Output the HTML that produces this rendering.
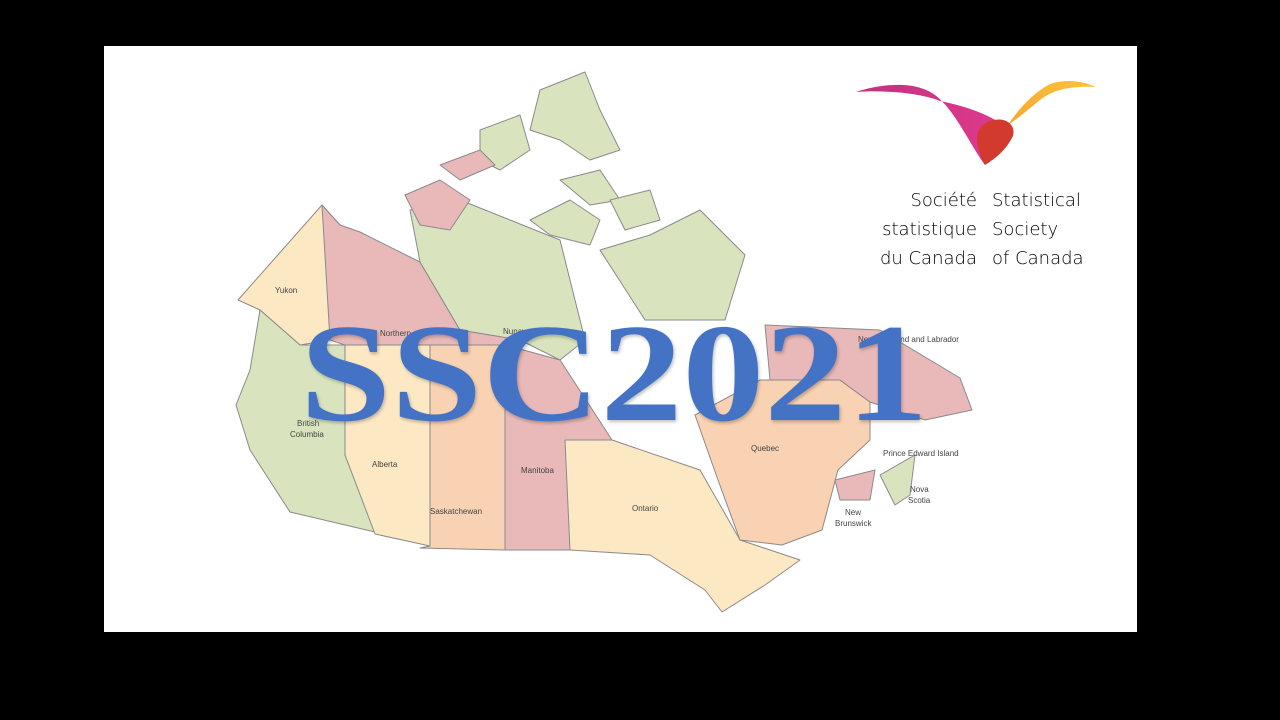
<!DOCTYPE html>
<html><head><meta charset="utf-8"><style>
html,body{margin:0;padding:0;background:#000;width:1280px;height:720px;overflow:hidden}
#w{position:absolute;left:104px;top:46px;width:1033px;height:586px;background:#fff}
svg{position:absolute;left:0;top:0}
#big{position:absolute;left:300px;top:306px;font-family:"Liberation Serif",serif;font-weight:bold;font-size:140px;color:#4472c4;transform-origin:0 0;transform:scaleX(1.17);line-height:136px;text-shadow:1px 2px 3px rgba(0,0,0,.25)}
.lg{position:absolute;font-family:"DejaVu Sans","Liberation Sans",sans-serif;font-size:18px;color:#000;line-height:29px;font-weight:300}
</style></head><body>
<div id="w"></div>
<svg width="1280" height="720" viewBox="0 0 1280 720">
<g stroke="#8a8a8a" stroke-width="1" stroke-linejoin="round">
<polygon fill="#fde8c4" points="238,300 322,205 340,225 330,340 300,345 260,310"/>
<polygon fill="#d9e4bf" points="260,310 300,345 345,345 345,455 375,532 290,512 250,450 236,405 250,370"/>
<polygon fill="#fde8c4" points="345,345 430,345 430,546 375,534 345,455"/>
<polygon fill="#f8d2b3" points="430,345 505,345 505,550 420,548 430,546"/>
<polygon fill="#e8b9b8" points="505,345 560,360 612,440 570,550 505,550"/>
<polygon fill="#fde8c4" points="565,440 612,440 700,470 740,540 800,560 765,585 722,612 705,590 650,555 570,550"/>
<polygon fill="#f8d2b3" points="695,415 760,380 840,380 870,402 870,440 838,470 822,530 782,545 740,540 718,480"/>
<polygon fill="#e8b9b8" points="765,325 880,330 960,378 972,410 925,420 870,402 840,380 770,380"/>
<polygon fill="#e8b9b8" points="322,205 340,225 360,232 420,262 460,330 520,340 505,345 345,345 330,340"/>
<polygon fill="#d9e4bf" points="410,210 460,200 560,240 585,340 560,360 520,340 460,330 420,262"/>
<polygon fill="#d9e4bf" points="600,250 650,235 700,210 745,255 725,320 645,320"/>
<polygon fill="#d9e4bf" points="530,220 570,200 600,220 590,245 550,235"/>
<polygon fill="#d9e4bf" points="560,180 600,170 620,200 590,205"/>
<polygon fill="#d9e4bf" points="610,200 650,190 660,220 625,230"/>
<polygon fill="#d9e4bf" points="540,90 585,72 600,110 620,150 590,160 560,140 530,130"/>
<polygon fill="#d9e4bf" points="480,130 520,115 530,150 500,170 480,160"/>
<polygon fill="#e8b9b8" points="405,195 440,180 470,200 450,230 420,225"/>
<polygon fill="#e8b9b8" points="440,165 480,150 495,165 460,180"/>
<polygon fill="#e8b9b8" points="835,480 875,470 870,500 840,500"/>
<polygon fill="#d9e4bf" points="880,475 915,455 910,495 895,505"/>
</g>
<g font-family="Liberation Sans,sans-serif" font-size="8" fill="#444">
<text x="275" y="293">Yukon</text><text x="380" y="336">Northern</text><text x="503" y="334">Nunavut</text>
<text x="858" y="342">Newfoundland and Labrador</text><text x="297" y="426">British</text><text x="290" y="437">Columbia</text>
<text x="372" y="467">Alberta</text><text x="430" y="514">Saskatchewan</text><text x="521" y="473">Manitoba</text>
<text x="632" y="511">Ontario</text><text x="751" y="451">Quebec</text><text x="883" y="456">Prince Edward Island</text>
<text x="910" y="492">Nova</text><text x="908" y="503">Scotia</text><text x="845" y="515">New</text><text x="835" y="526">Brunswick</text>
</g>
<defs>
<linearGradient id="m" x1="0" x2="1"><stop offset="0" stop-color="#c2307f"/><stop offset="1" stop-color="#e03a8c"/></linearGradient>
<linearGradient id="y" x1="0" x2="1" y1="1" y2="0"><stop offset="0" stop-color="#f29a2e"/><stop offset="1" stop-color="#fbc33a"/></linearGradient>
</defs>
<path fill="url(#m)" d="M856,92 C880,84 915,80 935,95 C955,110 970,145 985,165 L1005,126 C985,112 960,105 940,101 C920,93 885,90 856,92Z"/>
<path fill="url(#y)" d="M985,165 C1000,135 1020,100 1050,84 C1068,78 1085,82 1096,87 C1075,86 1055,88 1040,100 C1025,112 1012,124 1002,128 Z"/>
<path fill="#d23a2e" d="M985,165 C975,145 972,128 990,121 C1005,116 1016,124 1013,136 C1006,150 996,158 985,165Z"/>
</svg>
<div id="big">SSC2021</div>
<div class="lg" style="left:850px;top:186px;width:127px;text-align:right">Société<br>statistique<br>du Canada</div>
<div class="lg" style="left:992px;top:186px">Statistical<br>Society<br>of Canada</div>
</body></html>
